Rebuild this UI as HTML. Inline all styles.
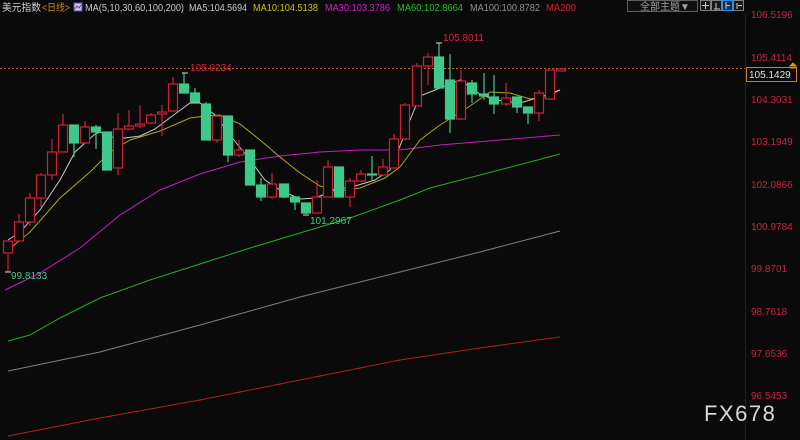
<!DOCTYPE html>
<html><head><meta charset="utf-8"><style>
body{margin:0;background:#0a0a0a;width:800px;height:440px;overflow:hidden;font-family:"Liberation Sans","Noto Sans CJK SC",sans-serif}
svg{display:block}
</style></head><body>
<svg width="800" height="440" xmlns="http://www.w3.org/2000/svg" font-family="Liberation Sans, Noto Sans CJK SC, sans-serif">
<rect width="800" height="440" fill="#0a0a0a"/>
<text x="2" y="11" font-size="10" fill="#d0d0d0" textLength="39" lengthAdjust="spacingAndGlyphs">美元指数</text>
<text x="42" y="11" font-size="10" fill="#d08a2a" textLength="28" lengthAdjust="spacingAndGlyphs">&lt;日线&gt;</text>
<rect x="74" y="3" width="8" height="8" fill="#c8c8ff" stroke="#3050d0" stroke-width="1"/>
<path d="M75 9 L77 6 L79 8 L81 5" stroke="#d02020" fill="none"/>
<text x="85" y="11" font-size="10" fill="#c8c8c8" textLength="99" lengthAdjust="spacingAndGlyphs">MA(5,10,30,60,100,200)</text>
<text x="189" y="11" font-size="10" fill="#c8c8c8" textLength="58" lengthAdjust="spacingAndGlyphs">MA5:104.5694</text>
<text x="253" y="11" font-size="10" fill="#c8c400" textLength="65" lengthAdjust="spacingAndGlyphs">MA10:104.5138</text>
<text x="325" y="11" font-size="10" fill="#d020d0" textLength="65" lengthAdjust="spacingAndGlyphs">MA30:103.3786</text>
<text x="397" y="11" font-size="10" fill="#20c020" textLength="66" lengthAdjust="spacingAndGlyphs">MA60:102.8664</text>
<text x="470" y="11" font-size="10" fill="#909090" textLength="70" lengthAdjust="spacingAndGlyphs">MA100:100.8782</text>
<text x="546" y="11" font-size="10" fill="#e02020" textLength="30" lengthAdjust="spacingAndGlyphs">MA200</text>
<rect x="627.5" y="0.5" width="70" height="11" fill="#101010" stroke="#606060"/>
<text x="640" y="10" font-size="10" fill="#a0a0a0">全部主题▼</text>
<rect x="700.5" y="0.5" width="10" height="10" fill="#181818" stroke="#808080"/>
<rect x="711.5" y="0.5" width="10" height="10" fill="#181818" stroke="#808080"/>
<rect x="722.5" y="0.5" width="10" height="10" fill="#103050" stroke="#3090e0"/>
<rect x="733.5" y="0.5" width="10" height="10" fill="#181818" stroke="#808080"/>
<path d="M705.5 2v7M702 5.5h7M716 3v6h4M714 9h6M726 2v7M726 5.5h4M737 3v6M738 5.5h4" stroke="#ccc" stroke-width="1" fill="none"/>
<line x1="745.5" y1="14" x2="745.5" y2="440" stroke="#202020"/>
<g font-size="10" fill="#d02040">
<text x="751" y="18">106.5196</text>
<text x="751" y="61">105.4114</text>
<text x="751" y="103">104.3031</text>
<text x="751" y="145">103.1949</text>
<text x="751" y="188">102.0866</text>
<text x="751" y="230">100.9784</text>
<text x="751" y="272">99.8701</text>
<text x="751" y="315">98.7618</text>
<text x="751" y="357">97.6536</text>
<text x="751" y="399">96.5453</text>
</g>
<line x1="0" y1="68.5" x2="745" y2="68.5" stroke="#c07020" stroke-dasharray="2,2"/>
<rect x="746.5" y="67.5" width="50" height="14" fill="#0a0a0a" stroke="#d08020"/>
<text x="749" y="78" font-size="10" fill="#e0e0e0">105.1429</text>
<path d="M790 66 l3 -3 l3 3 z M790 68 h6" stroke="#e09020" fill="#e09020"/>
<g fill="none" stroke-width="1">
<polyline stroke="#b02020" points="8,436 100,418 200,400 300,380 400,360 480,348 560,337"/>
<polyline stroke="#808080" points="8,371 100,352 200,325 300,297 400,272 480,252 560,231"/>
<polyline stroke="#20b020" points="8,341 30,335 60,318 100,298 150,280 200,264 250,248 300,233 350,218 400,200 430,188 480,175 530,162 560,154"/>
<polyline stroke="#c020c0" points="5,290 40,273 80,248 120,215 160,190 200,174 240,162 280,156 320,152 360,150 400,150 440,145 500,140 560,135"/>
<polyline stroke="#b0aa10" points="8,250 30,232 60,198 90,172 110,152 130,140 160,131 190,118 205,116 220,115 240,124 260,140 280,157 300,173 320,186 340,191 360,188 385,178 400,167 420,140 440,125 470,106 490,92 510,93 530,99 545,97 560,90"/>
<polyline stroke="#c8c8c8" points="8,240 20,232 40,210 60,180 75,152 95,134 100,132 110,137 125,138 140,136 155,129 175,114 190,103 200,103 215,115 230,135 250,160 265,180 280,190 300,199 315,198 335,190 355,186 375,180 390,170 400,146 410,120 420,96 440,88 460,80 480,94 495,100 520,103 540,97 560,90"/>
</g>
<g stroke-width="1.2">
<g stroke="#d02038" fill="#0a0a0a">
<line x1="8" y1="241" x2="8" y2="272"/><rect x="3.5" y="241" width="9" height="12"/>
<line x1="19" y1="214" x2="19" y2="241"/><rect x="14.5" y="222" width="9" height="19"/>
<line x1="30" y1="193" x2="30" y2="226"/><rect x="25.5" y="198" width="9" height="24"/>
<line x1="41" y1="173" x2="41" y2="207"/><rect x="36.5" y="175" width="9" height="23"/>
<line x1="52" y1="139" x2="52" y2="180"/><rect x="47.5" y="152" width="9" height="23"/>
<line x1="63" y1="114" x2="63" y2="152"/><rect x="58.5" y="125" width="9" height="27"/>
<line x1="85" y1="121" x2="85" y2="143"/><rect x="80.5" y="127" width="9" height="16"/>
<line x1="118" y1="113" x2="118" y2="175"/><rect x="113.5" y="129" width="9" height="39"/>
<line x1="129" y1="110" x2="129" y2="130"/><rect x="124.5" y="126" width="9" height="3"/>
<line x1="140" y1="105" x2="140" y2="128"/><rect x="135.5" y="124" width="9" height="2"/>
<line x1="151" y1="113" x2="151" y2="124"/><rect x="146.5" y="115" width="9" height="8"/>
<line x1="162" y1="105" x2="162" y2="136"/><rect x="157.5" y="112" width="9" height="2"/>
<line x1="173" y1="77" x2="173" y2="111"/><rect x="168.5" y="84" width="9" height="27"/>
<line x1="217" y1="116" x2="217" y2="143"/><rect x="212.5" y="116" width="9" height="24"/>
<line x1="239" y1="140" x2="239" y2="157"/><rect x="234.5" y="150" width="9" height="5"/>
<line x1="272" y1="173" x2="272" y2="199"/><rect x="267.5" y="184" width="9" height="13"/>
<line x1="317" y1="180" x2="317" y2="213"/><rect x="312.5" y="197" width="9" height="16"/>
<line x1="328" y1="160" x2="328" y2="197"/><rect x="323.5" y="167" width="9" height="30"/>
<line x1="350" y1="178" x2="350" y2="207"/><rect x="345.5" y="181" width="9" height="16"/>
<line x1="361" y1="170" x2="361" y2="182"/><rect x="356.5" y="174" width="9" height="7"/>
<line x1="383" y1="159" x2="383" y2="176"/><rect x="378.5" y="167" width="9" height="8"/>
<line x1="394" y1="134" x2="394" y2="168"/><rect x="389.5" y="139" width="9" height="29"/>
<line x1="405" y1="103" x2="405" y2="140"/><rect x="400.5" y="105" width="9" height="34"/>
<line x1="417" y1="63" x2="417" y2="106"/><rect x="412.5" y="66" width="9" height="40"/>
<line x1="428" y1="53" x2="428" y2="85"/><rect x="423.5" y="57" width="9" height="9"/>
<line x1="461" y1="70" x2="461" y2="120"/><rect x="456.5" y="81" width="9" height="38"/>
<line x1="506" y1="83" x2="506" y2="106"/><rect x="501.5" y="98" width="9" height="6"/>
<line x1="539" y1="90" x2="539" y2="121"/><rect x="534.5" y="93" width="9" height="20"/>
<line x1="550" y1="70" x2="550" y2="100"/><rect x="545.5" y="70" width="9" height="29"/>
<rect x="556.5" y="69" width="9" height="2"/>
</g>
<g stroke="#3ec98a" fill="#3ec98a">
<line x1="74" y1="125" x2="74" y2="157"/><rect x="69.5" y="125" width="9" height="18"/>
<line x1="96" y1="125" x2="96" y2="149"/><rect x="91.5" y="127" width="9" height="5"/>
<line x1="107" y1="132" x2="107" y2="170"/><rect x="102.5" y="132" width="9" height="38"/>
<line x1="184" y1="73" x2="184" y2="93"/><rect x="179.5" y="84" width="9" height="9"/>
<line x1="195" y1="88" x2="195" y2="102"/><rect x="190.5" y="93" width="9" height="9"/>
<line x1="206" y1="102" x2="206" y2="140"/><rect x="201.5" y="104" width="9" height="36"/>
<line x1="228" y1="116" x2="228" y2="162"/><rect x="223.5" y="116" width="9" height="39"/>
<line x1="250" y1="150" x2="250" y2="185"/><rect x="245.5" y="150" width="9" height="35"/>
<line x1="261" y1="178" x2="261" y2="201"/><rect x="256.5" y="185" width="9" height="12"/>
<line x1="284" y1="184" x2="284" y2="198"/><rect x="279.5" y="184" width="9" height="13"/>
<line x1="295" y1="197" x2="295" y2="210"/><rect x="290.5" y="197" width="9" height="5"/>
<line x1="306" y1="203" x2="306" y2="214"/><rect x="301.5" y="203" width="9" height="10"/>
<line x1="339" y1="167" x2="339" y2="197"/><rect x="334.5" y="167" width="9" height="30"/>
<line x1="372" y1="156" x2="372" y2="180"/><rect x="367.5" y="174" width="9" height="1"/>
<line x1="439" y1="43" x2="439" y2="88"/><rect x="434.5" y="57" width="9" height="31"/>
<line x1="450" y1="54" x2="450" y2="133"/><rect x="445.5" y="80" width="9" height="39"/>
<line x1="472" y1="80" x2="472" y2="103"/><rect x="467.5" y="83" width="9" height="11"/>
<line x1="484" y1="73" x2="484" y2="100"/><rect x="479.5" y="94" width="9" height="2"/>
<line x1="494" y1="75" x2="494" y2="114"/><rect x="489.5" y="97" width="9" height="7"/>
<line x1="517" y1="97" x2="517" y2="113"/><rect x="512.5" y="97" width="9" height="10"/>
<line x1="528" y1="107" x2="528" y2="124"/><rect x="523.5" y="107" width="9" height="6"/>
</g>
</g>
<path d="M5 272h6M182 73h6M436 43h6M303 215h6" stroke="#ddd"/>
<text x="190" y="71" font-size="10" fill="#e02040">105.0234</text>
<text x="443" y="41" font-size="10" fill="#e02040">105.8011</text>
<text x="11" y="279" font-size="10" fill="#3ec98a">99.8133</text>
<text x="310" y="224" font-size="10" fill="#3ec98a">101.2967</text>
<text x="704" y="421" font-size="22" fill="#d8d8d8" letter-spacing="1.5">FX678</text>
</svg>
</body></html>
